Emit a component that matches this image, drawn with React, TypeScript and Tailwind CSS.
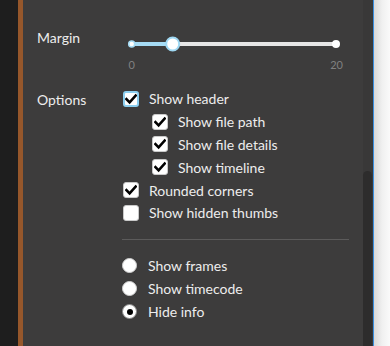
import React from "react";

const Check = () => (
  <svg width="12" height="12" viewBox="0 0 12 12" fill="none">
    <path d="M1.5 6.2 L4.6 9.3 L10.7 2.5" stroke="#000" strokeWidth="2.6" strokeLinecap="square" strokeLinejoin="miter" />
  </svg>
);

function CheckRow({ label, checked, focused, nested }: { label: string; checked: boolean; focused?: boolean; nested?: boolean }) {
  return (
    <div className={`flex items-center h-[22.8px] gap-[10px] ${nested ? "ml-[29px]" : ""}`}>
      <div
        className={`w-[16px] h-[16px] rounded-[3px] bg-white flex items-center justify-center ${
          focused ? "border-[2px] border-[#8ccff0]" : "border border-[#c9c9c9]"
        }`}
      >
        {checked && <Check />}
      </div>
      <span className="text-[14px] text-[#ededed] leading-[23px] whitespace-nowrap">{label}</span>
    </div>
  );
}

function RadioRow({ label, selected }: { label: string; selected?: boolean }) {
  return (
    <div className="flex items-center h-[23px] gap-[11px] ml-[85px]">
      <div
        className={`w-[15px] h-[15px] rounded-full bg-white flex items-center justify-center ${
          selected ? "border border-[#8a8a8a]" : "border border-[#d0d0d0]"
        }`}
      >
        {selected && <div className="w-[6px] h-[6px] rounded-full bg-black" />}
      </div>
      <span className="text-[14px] text-[#ededed] leading-[23px] whitespace-nowrap">{label}</span>
    </div>
  );
}

export default function App() {
  return (
    <div
      className="w-[390px] h-[346px] flex bg-[#1e1e1e] overflow-hidden"
      style={{ fontFamily: "Lato, 'Open Sans', sans-serif" }}
    >
      <div className="w-[18px] shrink-0" />
      <div className="w-[5px] shrink-0 bg-[#96572b]" />
      <div className="w-[340px] shrink-0 bg-[#3d3c3c] pl-[14px] flex flex-col">
        {/* Margin */}
        <div className="flex mt-[28px]">
          <div className="w-[86px] h-[20px] leading-[20px] text-[14px] text-[#ededed]">Margin</div>
          <div className="flex flex-col w-[226px]">
            <svg width="226" height="30" viewBox="0 0 226 30">
              <rect x="50" y="14" width="163" height="4" fill="#e6e6e6" />
              <rect x="8.7" y="14" width="41" height="4" fill="#a6dcf5" />
              <circle cx="8.7" cy="16" r="3" fill="#fff" stroke="#a6dcf5" strokeWidth="1.5" />
              <circle cx="213" cy="16" r="4" fill="#fff" />
              <circle cx="49.7" cy="16" r="6.5" fill="#fff" stroke="#9fd8f3" strokeWidth="2" />
            </svg>
            <div className="flex justify-between pl-[5.5px] pr-[6px] text-[11px] leading-[14px] text-[#808080]">
              <span>0</span>
              <span>20</span>
            </div>
          </div>
        </div>
        {/* Options */}
        <div className="flex mt-[15.5px]">
          <div className="w-[86px] h-[23px] leading-[23px] text-[14px] text-[#ededed]">Options</div>
          <div className="flex flex-col">
            <CheckRow label="Show header" checked focused />
            <CheckRow label="Show file path" checked nested />
            <CheckRow label="Show file details" checked nested />
            <CheckRow label="Show timeline" checked nested />
            <CheckRow label="Rounded corners" checked />
            <CheckRow label="Show hidden thumbs" checked={false} />
          </div>
        </div>
        <div className="ml-[85px] w-[227px] h-px bg-[#5c5b5b] mt-[14.5px]" />
        <div className="flex flex-col mt-[14.5px]">
          <RadioRow label="Show frames" />
          <RadioRow label="Show timecode" />
          <RadioRow label="Hide info" selected />
        </div>
      </div>
      <div className="w-[10px] shrink-0 bg-[#393838] flex flex-col">
        <div className="mt-[171px] flex-1 w-[9px] bg-[#2d2c2c] rounded-t-[5px]" />
      </div>
      <div className="w-px shrink-0 bg-[#3a8fe0]" />
      <div className="flex-1 bg-gradient-to-r from-[#d8d8d8] via-[#f0f0f0] to-[#fafafa]" />
    </div>
  );
}
